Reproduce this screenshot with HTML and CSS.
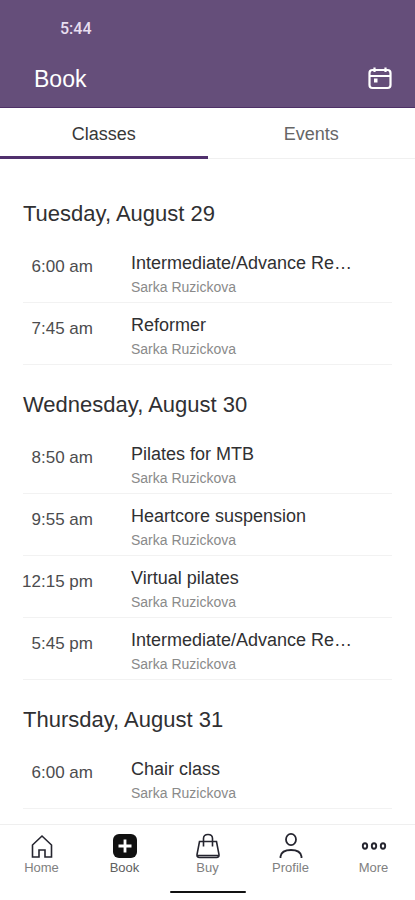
FILE: index.html
```html
<!DOCTYPE html>
<html lang="en">
<head>
<meta charset="utf-8">
<meta name="viewport" content="width=device-width, initial-scale=1">
<title>Book</title>
<link rel="stylesheet" href="styles.css">
</head>
<body>
<header class="header">
  <time class="clock">5:44</time>
  <div class="title-bar">
    <h1 class="page-title">Book</h1>
    <button class="icon-button" type="button" aria-label="Choose date">
      <svg width="26" height="24" viewBox="0 0 26 24" fill="none" stroke="currentColor" stroke-width="2.200">
        <rect x="2.500" y="3" width="21" height="18" rx="3"/>
        <path d="M2.500 9H23.500M7.500 0.500V5M18.500 0.500V5"/>
        <rect x="7" y="11.500" width="3.500" height="4" fill="currentColor" stroke="none"/>
      </svg>
    </button>
  </div>
</header>
<nav class="tabs" aria-label="Schedule type">
  <a class="tab tab-active" href="#classes">Classes</a>
  <a class="tab" href="#events">Events</a>
</nav>
<main class="schedule" id="classes">
  <section>
    <h2 class="day">Tuesday, August 29</h2>
    <ul class="list">
      <li class="row"><time class="time">6:00 am</time><div class="info"><h3 class="name">Intermediate/Advance Re…</h3><p class="teacher">Sarka Ruzickova</p></div></li>
      <li class="row"><time class="time">7:45 am</time><div class="info"><h3 class="name">Reformer</h3><p class="teacher">Sarka Ruzickova</p></div></li>
    </ul>
  </section>
  <section>
    <h2 class="day">Wednesday, August 30</h2>
    <ul class="list">
      <li class="row"><time class="time">8:50 am</time><div class="info"><h3 class="name">Pilates for MTB</h3><p class="teacher">Sarka Ruzickova</p></div></li>
      <li class="row"><time class="time">9:55 am</time><div class="info"><h3 class="name">Heartcore suspension</h3><p class="teacher">Sarka Ruzickova</p></div></li>
      <li class="row"><time class="time">12:15 pm</time><div class="info"><h3 class="name">Virtual pilates</h3><p class="teacher">Sarka Ruzickova</p></div></li>
      <li class="row"><time class="time">5:45 pm</time><div class="info"><h3 class="name">Intermediate/Advance Re…</h3><p class="teacher">Sarka Ruzickova</p></div></li>
    </ul>
  </section>
  <section>
    <h2 class="day">Thursday, August 31</h2>
    <ul class="list">
      <li class="row"><time class="time">6:00 am</time><div class="info"><h3 class="name">Chair class</h3><p class="teacher">Sarka Ruzickova</p></div></li>
    </ul>
  </section>
</main>
<footer class="footer">
  <nav class="nav" aria-label="Main">
    <a class="nav-item" href="#home">
      <svg width="28" height="28" viewBox="0 0 28 28" fill="none" stroke="currentColor" stroke-width="1.600"><path d="M4.500 25V13L14 4L23.500 13V25H17V18H11V25Z"/></svg>
      Home
    </a>
    <a class="nav-item nav-current" href="#book" aria-current="page">
      <svg width="28" height="28" viewBox="0 0 28 28"><rect x="2" y="2" width="24" height="24" rx="6" fill="currentColor"/><path d="M14 7.500V20.500M7.500 14H20.500" stroke="#fff" stroke-width="2.800"/></svg>
      Book
    </a>
    <a class="nav-item" href="#buy">
      <svg width="28" height="28" viewBox="0 0 28 28" fill="none" stroke="currentColor" stroke-width="1.600"><path d="M5.500 9.500H22.500L25 22.500Q25.300 25.500 22.500 25.500H5.500Q2.700 25.500 3 22.500ZM3.500 23.500H24.500M9.500 14.500V6.500Q9.500 2.500 14 2.500T18.500 6.500V14.500"/></svg>
      Buy
    </a>
    <a class="nav-item" href="#profile">
      <svg width="28" height="28" viewBox="0 0 28 28" fill="none" stroke="currentColor" stroke-width="1.800"><ellipse cx="14" cy="7.500" rx="5" ry="5.700"/><path d="M3.500 26V24.500Q4.500 18 14 18T24.500 24.500V26"/></svg>
      Profile
    </a>
    <a class="nav-item" href="#more">
      <svg width="28" height="28" viewBox="0 0 28 28" fill="none" stroke="currentColor" stroke-width="1.900"><ellipse cx="5" cy="14" rx="2.200" ry="2.700"/><ellipse cx="14" cy="14" rx="2.200" ry="2.700"/><ellipse cx="23" cy="14" rx="2.200" ry="2.700"/></svg>
      More
    </a>
  </nav>
  <div class="home-bar"></div>
</footer>
</body>
</html>
```
FILE: styles.css
```css
* {
  box-sizing: border-box;
  margin: 0;
  padding: 0;
}

body {
  display: flex;
  flex-direction: column;
  min-height: 100vh;
  background: #fff;
  color: #303032;
  font-family: "Liberation Sans", Arial, sans-serif;
}

a {
  color: inherit;
  text-decoration: none;
}

.header {
  padding: 19px 22px 12px 34px;
  background: #654e7a;
  border-bottom: 1px solid #4e3067;
  color: #fff;
}

.clock {
  display: block;
  padding-left: 26px;
  color: #e8def0;
  font-family: Roboto, sans-serif;
  font-size: 16px;
  font-weight: 500;
  line-height: 20px;
}

.title-bar {
  display: flex;
  align-items: center;
  justify-content: space-between;
  margin-top: 24px;
}

.page-title {
  font-size: 23px;
  font-weight: 400;
  line-height: 32px;
}

.icon-button {
  display: flex;
  padding: 0;
  border: 0;
  background: none;
  color: #fff;
}

.tabs {
  display: flex;
}

.tab {
  flex: 1;
  padding-top: 4px;
  border-bottom: 1px solid #f0f0f0;
  color: #666;
  font-size: 18px;
  line-height: 44px;
  text-align: center;
}

.tab-active {
  border-bottom: 3px solid #50306d;
  color: #383838;
}

.schedule {
  flex: 1;
  padding: 15px 23px 12px;
}

.day {
  padding: 27px 0 14px;
  font-size: 22px;
  font-weight: 400;
  line-height: 26px;
}

.list {
  list-style: none;
}

.row {
  display: flex;
  gap: 38px;
  padding: 11px 30px 6px 0;
  border-bottom: 1px solid #f2f2f2;
}

.time {
  display: flex;
  flex: none;
  justify-content: flex-end;
  width: 70px;
  color: #4c4c4e;
  font-size: 17px;
  line-height: 30px;
  white-space: nowrap;
}

.info {
  flex: 1;
  min-width: 0;
}

.name {
  font-size: 18px;
  font-weight: 400;
  line-height: 22px;
}

.teacher {
  padding-top: 4px;
  color: #8a8a8a;
  font-size: 14px;
  line-height: 18px;
}

.footer {
  padding: 7px 0;
  border-top: 1px solid #efefef;
}

.nav {
  display: flex;
}

.nav-item {
  display: flex;
  flex: 1;
  flex-direction: column;
  align-items: center;
  color: #808080;
  font-size: 13px;
  line-height: 16px;
}

.nav-item svg {
  color: #25252f;
}

.nav-current {
  color: #606060;
}

.nav-current svg {
  color: #111;
}

.home-bar {
  width: 76px;
  height: 2px;
  margin: 15px auto 0;
  border-radius: 1px;
  background: #111;
}
```
